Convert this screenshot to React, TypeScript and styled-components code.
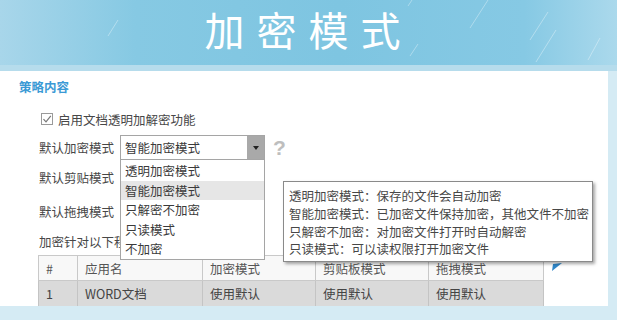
import styled, { createGlobalStyle } from 'styled-components'

const GlobalStyle = createGlobalStyle`
  html, body {
    margin: 0;
    padding: 0;
    background: #d5ebf4;
  }
  body {
    font-family: "Noto Sans CJK SC", "Noto Sans", sans-serif;
    font-size: 12.5px;
    color: #474747;
  }
  * {
    box-sizing: border-box;
  }
`

const Page = styled.div`
  width: 617px;
  height: 320px;
  overflow: hidden;
  background: #d5ebf4;
`

const Header = styled.div`
  position: relative;
  height: 65px;
  background: linear-gradient(90deg, #a8d6ea 0%, #86c9e3 22%, #7ec5e1 55%, #86c9e4 85%, #abd9ec 100%);
  display: flex;
  justify-content: center;
  padding-top: 5px;
  overflow: hidden;
`

const Rain = styled.svg`
  position: absolute;
  inset: 0;
`

const Title = styled.h1`
  position: relative;
  margin: 0;
  font-family: "Noto Sans CJK SC", sans-serif;
  font-weight: 400;
  font-size: 40px;
  line-height: 48px;
  letter-spacing: 12px;
  color: #ffffff;
`

const Strip = styled.div`
  height: 6px;
  background: #b6dcec;
`

const Panel = styled.div`
  position: relative;
  width: 608px;
  height: 235px;
  background: #ffffff;
  padding: 8px 0 0 19px;
  overflow: hidden;
`

const SectionTitle = styled.div`
  font-weight: 700;
  color: #3b9ad5;
  line-height: 16px;
  height: 16px;
`

const Form = styled.div`
  display: flex;
  flex-direction: column;
  padding-left: 20px;
`

const Row = styled.div<{ $top: number; $h?: number }>`
  display: flex;
  align-items: center;
  margin-top: ${p => p.$top}px;
  height: ${p => p.$h ?? 20}px;
  white-space: nowrap;
`

const CheckBox = styled.span`
  display: inline-flex;
  width: 12px;
  height: 12px;
  border: 1px solid #9a9a9a;
  margin: 0 5px 0 2px;
  align-items: center;
  justify-content: center;
`

const Label = styled.span`
  width: 81px;
  flex-shrink: 0;
`

const SelectWrap = styled.div`
  position: relative;
  width: 145px;
  height: 25px;
`

const SelectBox = styled.div`
  display: flex;
  height: 25px;
  border: 1px solid #a5a5a5;
  background: #fff;
`

const SelectText = styled.span`
  flex: 1;
  padding-left: 4px;
  line-height: 23px;
  color: #3a3a3a;
`

const SelectArrow = styled.span`
  width: 17px;
  background: #a9a9a9;
  display: flex;
  align-items: center;
  justify-content: center;
  &::after {
    content: '';
    border-left: 3.5px solid transparent;
    border-right: 3.5px solid transparent;
    border-top: 4px solid #222;
  }
`

const Help = styled.span`
  margin-left: 8px;
  font-family: "Liberation Sans", sans-serif;
  font-weight: 700;
  font-size: 21px;
  line-height: 21px;
  color: #bebebe;
`

const DropList = styled.ul`
  position: absolute;
  top: 24px;
  left: 0;
  width: 145px;
  margin: 0;
  padding: 1px 0 0;
  list-style: none;
  background: #fff;
  border: 1px solid #a5a5a5;
  z-index: 5;
`

const DropItem = styled.li<{ $active?: boolean }>`
  height: 19.5px;
  line-height: 19.5px;
  padding-left: 4px;
  color: #3a3a3a;
  background: ${p => (p.$active ? '#e6e6e6' : 'transparent')};
`

const TableRow = styled.div`
  display: flex;
  align-items: flex-start;
  margin-top: 4px;
`

const Table = styled.table`
  border-collapse: collapse;
  width: 505px;
  margin-left: -1px;
  table-layout: fixed;
`

const Th = styled.th<{ $w: number }>`
  width: ${p => p.$w}px;
  height: 25px;
  padding: 0 0 0 7px;
  text-align: left;
  font-weight: 400;
  color: #555;
  background: #f8f8f8;
  border: 1px solid #c9c9c9;
`

const Td = styled.td`
  height: 26px;
  padding: 0 0 0 7px;
  color: #444;
  background: #dadada;
  border: 1px solid #c4c4c4;
`

const Expand = styled.svg`
  margin: 8px 0 0 8px;
`

const Tip = styled.div`
  position: absolute;
  left: 283px;
  top: 110px;
  width: 310px;
  height: 81px;
  padding: 5px 0 0 5px;
  background: #fff;
  border: 1px solid #8a8a8a;
  box-shadow: 2px 2px 3px rgba(0, 0, 0, 0.35);
  z-index: 6;
`

const TipLine = styled.div`
  line-height: 17.8px;
  color: #474747;
  white-space: nowrap;
`

const modes = ['透明加密模式', '智能加密模式', '只解密不加密', '只读模式', '不加密']

const tips = [
  '透明加密模式：保存的文件会自动加密',
  '智能加密模式：已加密文件保持加密，其他文件不加密',
  '只解密不加密：对加密文件打开时自动解密',
  '只读模式：可以读权限打开加密文件',
]

const columns: [string, number][] = [
  ['#', 39],
  ['应用名', 125],
  ['加密模式', 113],
  ['剪贴板模式', 113],
  ['拖拽模式', 115],
]

const App = () => {
  return (
    <Page>
      <GlobalStyle />
      <Header>
        <Rain width="617" height="65">
          <g stroke="#ffffff" strokeOpacity="0.35" strokeWidth="1">
            <line x1="118" y1="20" x2="108" y2="36" />
            <line x1="412" y1="0" x2="408" y2="6" />
            <line x1="418" y1="44" x2="410" y2="56" />
            <line x1="488" y1="0" x2="470" y2="28" />
            <line x1="548" y1="12" x2="530" y2="40" />
            <line x1="556" y1="30" x2="536" y2="62" />
            <line x1="600" y1="38" x2="588" y2="60" />
          </g>
        </Rain>
        <Title>加密模式</Title>
      </Header>
      <Strip />
      <Panel>
        <SectionTitle>策略内容</SectionTitle>
        <Form>
          <Row $top={14}>
            <CheckBox>
              <svg width="10" height="10" viewBox="0 0 10 10">
                <path d="M1.5 5.2 L4 7.8 L8.8 1.8" fill="none" stroke="#777" strokeWidth="1.2" />
              </svg>
            </CheckBox>
            启用文档透明加解密功能
          </Row>
          <Row $top={6} $h={25}>
            <Label>默认加密模式</Label>
            <SelectWrap>
              <SelectBox>
                <SelectText>智能加密模式</SelectText>
                <SelectArrow />
              </SelectBox>
              <DropList>
                {modes.map((m, i) => (
                  <DropItem key={m} $active={i === 1}>
                    {m}
                  </DropItem>
                ))}
              </DropList>
            </SelectWrap>
            <Help>?</Help>
          </Row>
          <Row $top={7}>
            <Label>默认剪贴模式</Label>
          </Row>
          <Row $top={14}>
            <Label>默认拖拽模式</Label>
          </Row>
          <Row $top={10}>加密针对以下程序</Row>
          <TableRow>
            <Table>
              <thead>
                <tr>
                  {columns.map(([name, w]) => (
                    <Th key={name} $w={w}>
                      {name}
                    </Th>
                  ))}
                </tr>
              </thead>
              <tbody>
                <tr>
                  <Td>1</Td>
                  <Td>WORD文档</Td>
                  <Td>使用默认</Td>
                  <Td>使用默认</Td>
                  <Td>使用默认</Td>
                </tr>
              </tbody>
            </Table>
            <Expand width="10" height="8" viewBox="0 0 10 8">
              <path d="M10 0 L0 8 L1 1 Z" fill="#2f86c8" />
            </Expand>
          </TableRow>
        </Form>
        <Tip>
          {tips.map(t => (
            <TipLine key={t}>{t}</TipLine>
          ))}
        </Tip>
      </Panel>
    </Page>
  )
}

export default App
